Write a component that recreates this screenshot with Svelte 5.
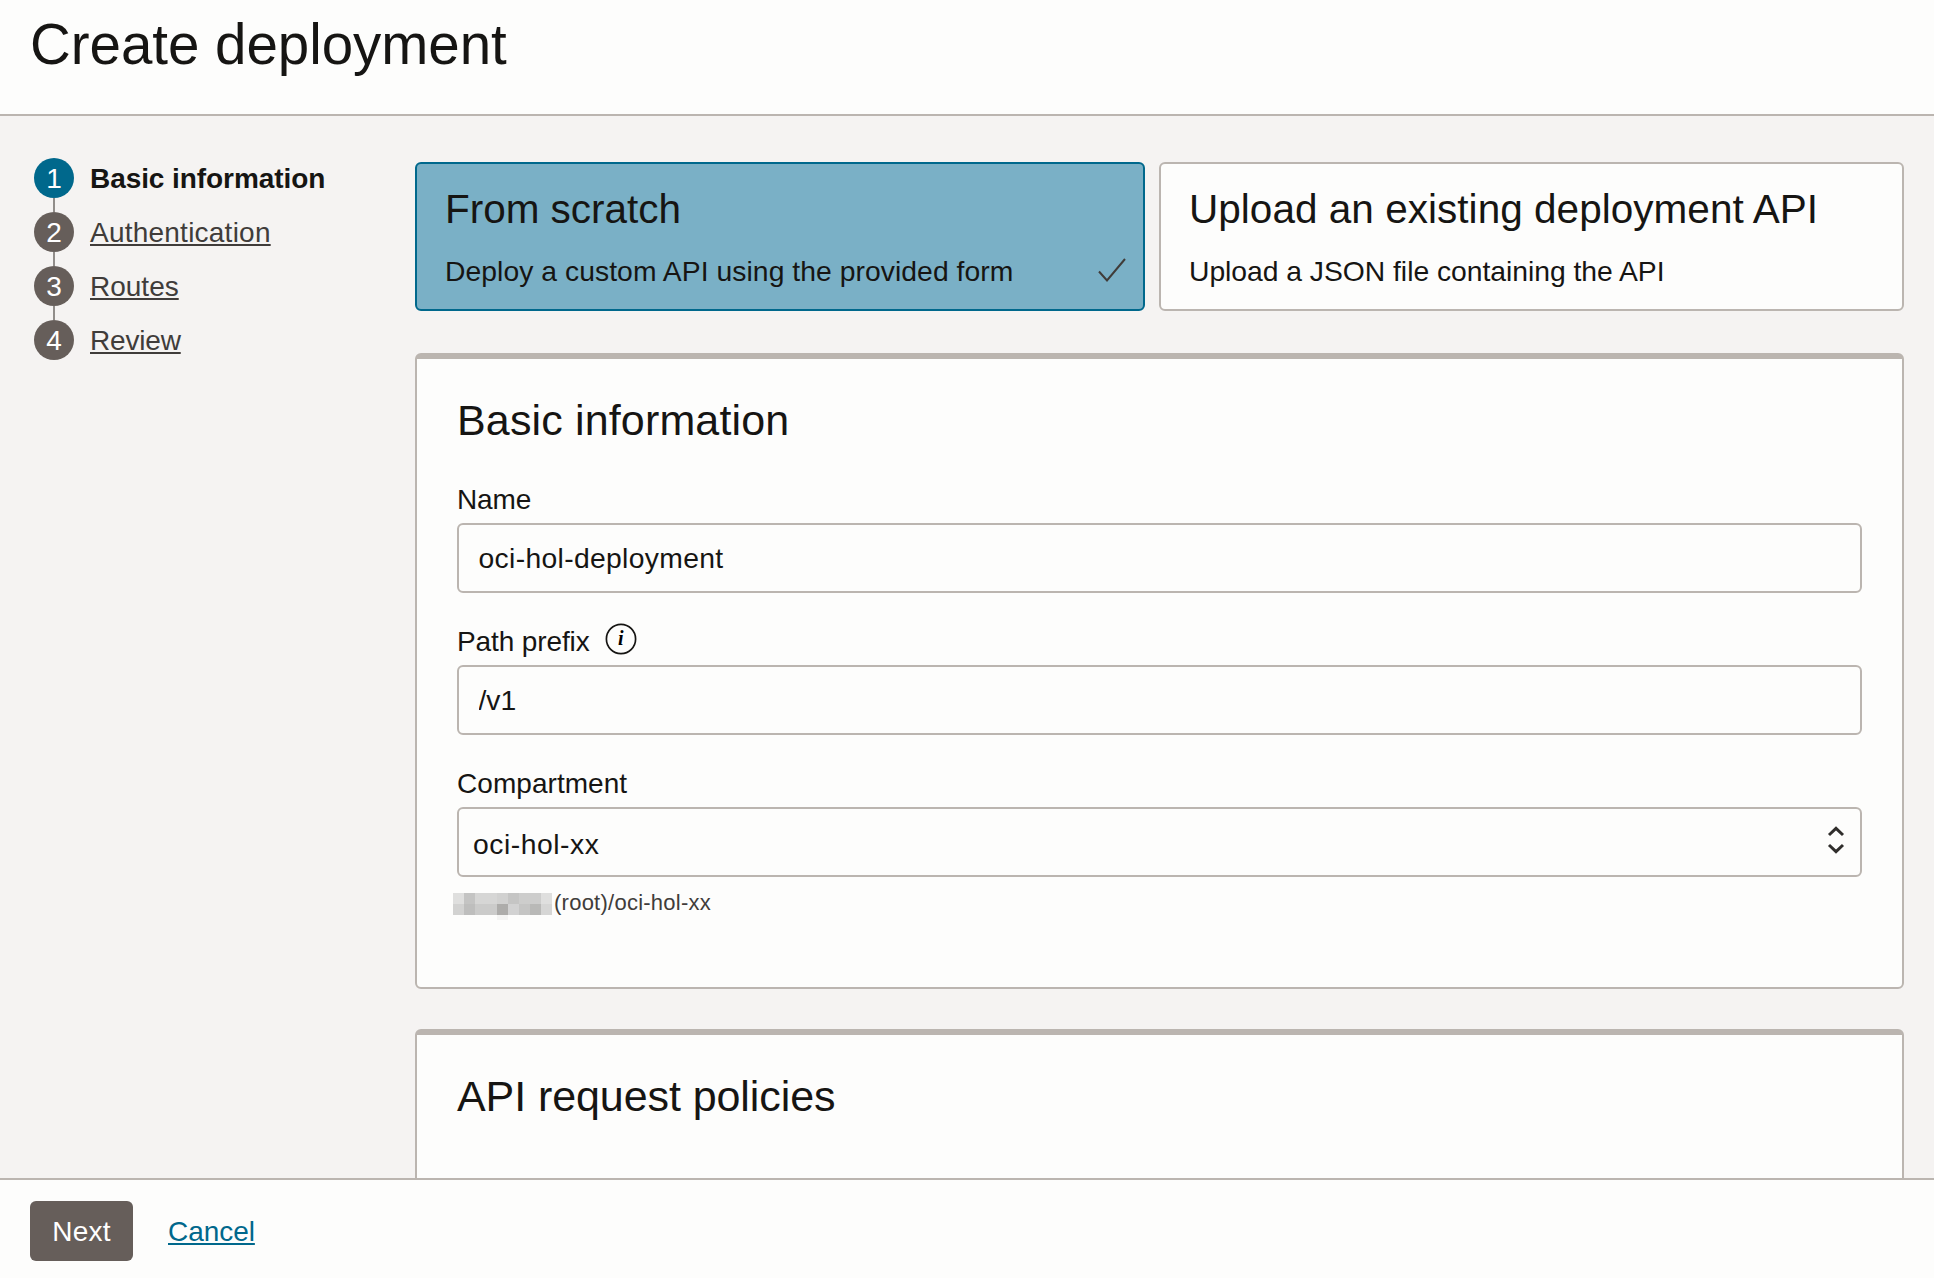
<script>
  const steps = ['Basic information', 'Authentication', 'Routes', 'Review'];

  let current = $state(0);
  let name = $state('oci-hol-deployment');
  let prefix = $state('/v1');

  // Shades of the redacted tenancy name, one entry per mosaic cell.
  const mosaic = [
    ['#dfdfde', '#c4c4c3', '#d6d6d5', '#d6d6d5', '#d1d1d0', '#c5c5c4', '#cdcdcc', '#cdcdcc', '#dfdfde'],
    ['#d2d2d1', '#bebebd', '#cbcbca', '#cbcbca', '#adacaa', '#d2d2d2', '#c5c5c4', '#b9b9b7', '#d6d6d5']
  ];
</script>

<div class="page">
  <header>
    <h1>Create deployment</h1>
  </header>

  <main>
    <nav>
      <ol>
        {#each steps as step, i}
          <li class:current={i === current}>
            <span class="dot">{i + 1}</span>
            <span class="label">{step}</span>
          </li>
        {/each}
      </ol>
    </nav>

    <div class="content">
      <div class="choices">
        <div class="choice selected">
          <h2>From scratch</h2>
          <div class="desc">
            <p>Deploy a custom API using the provided form</p>
            <svg class="check" width="30" height="26" viewBox="0 0 30 26">
              <path d="M2 14.5 10 23.5 28 2" fill="none" stroke="#403c39" stroke-width="2" />
            </svg>
          </div>
        </div>
        <div class="choice">
          <h2>Upload an existing deployment API</h2>
          <div class="desc json"><p>Upload a JSON file containing the API</p></div>
        </div>
      </div>

      <section class="basic">
        <h3>Basic information</h3>
        <div class="field">
          <label for="name">Name</label>
          <input id="name" class="name" bind:value={name} />
        </div>
        <div class="field">
          <label for="prefix">
            Path prefix
            <svg class="info" width="32" height="32" viewBox="0 0 32 32">
              <circle cx="16" cy="16" r="14.6" fill="none" stroke="#161513" stroke-width="1.7" />
              <text x="15.6" y="22.4" text-anchor="middle">i</text>
            </svg>
          </label>
          <input id="prefix" bind:value={prefix} />
        </div>
        <div class="field">
          <span class="caption">Compartment</span>
          <div class="select">
            <span>oci-hol-xx</span>
            <svg width="18" height="30" viewBox="0 0 18 30">
              <path d="M2 10 9 3.4 16 10M2 20 9 26.6 16 20" fill="none" stroke="#302e2c" stroke-width="3" />
            </svg>
          </div>
          <div class="hint">
            <svg width="99" height="29" viewBox="0 0 99 29">
              {#each mosaic as row, r}
                {#each row as fill, c}
                  <rect x={c * 11} y={r * 11} width="11" height="11" {fill} />
                {/each}
              {/each}
              <rect x="44" y="22" width="11" height="5" fill="#f4f4f3" />
            </svg>
            <span>(root)/oci-hol-xx</span>
          </div>
        </div>
      </section>

      <section class="policies">
        <h3>API request policies</h3>
      </section>
    </div>
  </main>

  <footer>
    <button>Next</button>
    <a href="#cancel">Cancel</a>
  </footer>
</div>

<style>
  :global(body) {
    margin: 0;
  }
  .page {
    display: flex;
    flex-direction: column;
    height: 1278px;
    overflow: hidden;
    background: #f5f3f2;
    color: #161513;
    font: 28px/34px 'Liberation Sans', Arial, sans-serif;
  }
  .page :global(*) {
    box-sizing: border-box;
  }
  h1,
  h2,
  h3,
  p,
  ol {
    margin: 0;
    padding: 0;
    font-weight: 400;
  }
  header {
    flex: none;
    height: 116px;
    padding: 13px 30px 0;
    border-bottom: 2px solid #bbb5b0;
    background: #fdfdfc;
  }
  h1 {
    font-size: 56.5px;
    line-height: 64px;
    letter-spacing: -0.04px;
  }
  main {
    flex: 1;
    min-height: 0;
    display: flex;
    overflow: hidden;
  }
  nav {
    flex: none;
    width: 415px;
    padding: 42px 0 0 34px;
  }
  ol {
    display: flex;
    flex-direction: column;
    gap: 14px;
    list-style: none;
  }
  li {
    position: relative;
    display: flex;
    align-items: center;
    gap: 16px;
    height: 40px;
    color: #403c3a;
  }
  li + li::before {
    content: '';
    position: absolute;
    left: 19px;
    top: -14px;
    width: 2px;
    height: 14px;
    background: #918d8a;
  }
  .dot {
    width: 40px;
    height: 40px;
    border-radius: 50%;
    background: #665e5a;
    color: #fff;
    line-height: 41px;
    text-align: center;
  }
  .label {
    padding-top: 2px;
    text-decoration: underline;
    text-decoration-thickness: 2px;
    text-underline-offset: 2px;
    text-decoration-skip-ink: none;
  }
  li:nth-child(2) .label {
    letter-spacing: 0.23px;
  }
  li:nth-child(4) .label {
    letter-spacing: -0.18px;
  }
  .current {
    color: #161513;
    font-weight: 700;
  }
  .current .dot {
    background: #00688c;
    font-weight: 400;
  }
  .current .label {
    letter-spacing: -0.07px;
    text-decoration: none;
  }
  .content {
    flex: none;
    width: 1489px;
    padding-top: 46px;
  }
  .choices {
    display: grid;
    grid-template-columns: 730px 745px;
    gap: 14px;
  }
  .choice {
    height: 149px;
    padding: 22px 16px 0 28px;
    border: 2px solid #bbb5b0;
    border-radius: 6px;
    background: #fdfdfc;
  }
  .selected {
    border-color: #00688c;
    background: #7ab0c6;
  }
  h2 {
    font-size: 40.5px;
    line-height: 46px;
    letter-spacing: 0.03px;
  }
  .selected h2 {
    letter-spacing: -0.03px;
  }
  .desc {
    display: flex;
    justify-content: space-between;
    margin-top: 22px;
    font-size: 28.3px;
    line-height: 34px;
    letter-spacing: 0.05px;
  }
  .json {
    letter-spacing: -0.03px;
  }
  .check {
    margin-top: 3px;
  }
  section {
    padding: 0 40px;
    border: 2px solid #bbb5b0;
    border-top-width: 6px;
    border-radius: 6px;
    background: #fdfdfc;
  }
  .basic {
    height: 636px;
    margin-top: 42px;
    padding-top: 36px;
  }
  .policies {
    height: 300px;
    margin-top: 40px;
    padding-top: 36px;
  }
  h3 {
    font-size: 43px;
    line-height: 50px;
    letter-spacing: 0.15px;
  }
  .policies h3 {
    letter-spacing: -0.08px;
  }
  .field {
    display: flex;
    flex-direction: column;
  }
  .field label,
  .caption {
    display: flex;
    align-items: center;
    height: 34px;
    margin: 38px 0 6px;
  }
  .field + .field label,
  .field + .field .caption {
    margin: 32px 0 6px;
  }
  .field label {
    letter-spacing: -0.12px;
  }
  .caption {
    letter-spacing: 0.05px;
  }
  .info {
    margin: -6px 0 0 15px;
  }
  .info text {
    font: italic 700 20px 'Liberation Serif', serif;
  }
  input,
  .select {
    width: 100%;
    height: 70px;
    border: 2px solid #bbb5b0;
    border-radius: 6px;
    background: #fdfdfc;
    color: #161513;
    font: 28.3px/34px 'Liberation Sans', Arial, sans-serif;
  }
  input {
    padding: 0 20px 0 19.5px;
    outline: none;
  }
  .name {
    letter-spacing: 0.33px;
  }
  .select {
    display: flex;
    align-items: center;
    justify-content: space-between;
    padding: 0 15px 0 14px;
    letter-spacing: 0.53px;
  }
  .select span {
    padding-top: 3px;
  }
  .select svg {
    margin-top: -4px;
  }
  .hint {
    display: flex;
    gap: 2px;
    margin: 11px 0 0 -4px;
    color: #403c3a;
    font-size: 22px;
    line-height: 28px;
    letter-spacing: 0.25px;
  }
  .hint span {
    padding-top: 1px;
  }
  .hint svg {
    margin-top: 4.5px;
  }
  footer {
    flex: none;
    display: flex;
    align-items: flex-start;
    gap: 35px;
    height: 100px;
    padding: 21px 30px 0;
    border-top: 2px solid #bbb5b0;
    background: #fdfdfc;
  }
  button {
    width: 103px;
    height: 60px;
    padding: 2px 0 0;
    border: 0;
    border-radius: 6px;
    background: #665e5a;
    color: #fff;
    font: inherit;
    letter-spacing: 0.2px;
  }
  a {
    margin-top: 14px;
    color: #00688c;
    letter-spacing: -0.05px;
    text-decoration-thickness: 2px;
    text-underline-offset: 2px;
    text-decoration-skip-ink: none;
  }
</style>
